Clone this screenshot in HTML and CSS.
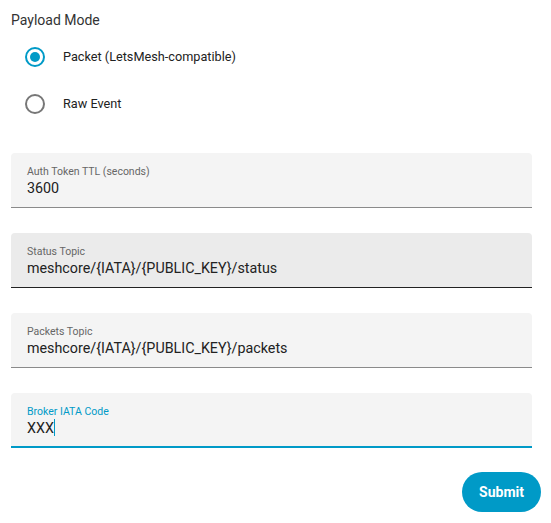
FILE: index.html
```html
<!DOCTYPE html>
<html lang="en">
<head>
  <meta charset="UTF-8" />
  <title>Broker Settings</title>
  <link rel="stylesheet" href="styles.css">
</head>
<body>
  <form class="settings">
    <div class="group-title">Payload Mode</div>
    <div class="radio-group">
      <label class="radio-row">
        <span class="radio checked"><span class="dot"></span></span>
        <span class="radio-label">Packet (LetsMesh-compatible)</span>
      </label>
      <label class="radio-row">
        <span class="radio"></span>
        <span class="radio-label">Raw Event</span>
      </label>
    </div>

    <div class="field">
      <div class="field-label">Auth Token TTL (seconds)</div>
      <div class="field-value">3600</div>
    </div>

    <div class="field hover">
      <div class="field-label">Status Topic</div>
      <div class="field-value">meshcore/{IATA}/{PUBLIC_KEY}/status</div>
    </div>

    <div class="field">
      <div class="field-label">Packets Topic</div>
      <div class="field-value">meshcore/{IATA}/{PUBLIC_KEY}/packets</div>
    </div>

    <div class="field focused">
      <div class="field-label">Broker IATA Code</div>
      <div class="field-value">XXX<span class="caret"></span></div>
    </div>

    <div class="actions">
      <button type="button" class="submit">Submit</button>
    </div>
  </form>
</body>
</html>
```

FILE: styles.css
```css
body {
  margin: 0;
  font-family: Roboto, "Liberation Sans", Arial, sans-serif;
  background: #fff;
  color: #222;
}

.settings {
  padding: 10px 10px 0 11px;
}

.group-title {
  font-size: 14px;
  line-height: 20px;
  color: #333;
}

.radio-group {
  display: flex;
  flex-direction: column;
  margin: 3px 0 26px;
}

.radio-row {
  display: flex;
  align-items: center;
  height: 47px;
  padding-left: 14px;
}

.radio {
  box-sizing: border-box;
  width: 20px;
  height: 20px;
  border: 2px solid #777;
  border-radius: 50%;
  display: flex;
  align-items: center;
  justify-content: center;
}

.radio.checked {
  border-color: #009ac7;
}

.dot {
  width: 10px;
  height: 10px;
  border-radius: 50%;
  background: #009ac7;
}

.radio-label {
  margin-left: 18px;
  font-size: 12.7px;
  color: #222;
}

/* Filled text fields */
.field {
  margin-right: 9px;
  margin-bottom: 25px;
  padding: 12px 16px 9px;
  background: #f4f4f4;
  border-radius: 4px 4px 0 0;
  border-bottom: 1px solid #8a8a8a;
}

.field.hover {
  background: #ebebeb;
  border-bottom-color: #222;
}

.field.focused {
  padding-bottom: 8px;
  border-bottom: 2px solid #009ac7;
}

.field-label {
  font-size: 10.5px;
  line-height: 13px;
  color: #666;
}

.focused .field-label {
  color: #009ac7;
}

.field-value {
  font-size: 14.3px;
  line-height: 20px;
  color: #222;
}

.caret {
  display: inline-block;
  width: 1px;
  height: 17px;
  background: #009ac7;
  vertical-align: -3px;
}

.actions {
  display: flex;
  justify-content: flex-end;
  margin-top: -1px;
}

.submit {
  width: 79px;
  height: 40px;
  border: none;
  border-radius: 20px;
  background: #009ac7;
  color: #fff;
  font-family: inherit;
  font-size: 14px;
  font-weight: 700;
  cursor: pointer;
}
```
